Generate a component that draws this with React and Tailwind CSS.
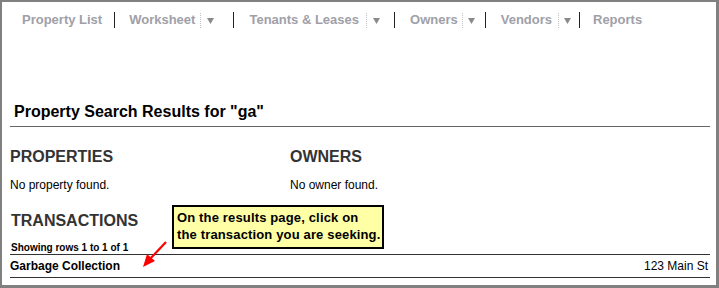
import React from "react";

const navFont = { fontFamily: '"Liberation Sans", Arial, sans-serif' };

function Sep({ ml }) {
  return <div className={`w-px h-[16px] bg-[#222] ${ml}`} />;
}
function Dot({ ml }) {
  return <div className={`h-[15px] border-l border-dotted border-[#c4c4c4] ${ml}`} />;
}
function Caret({ ml }) {
  return (
    <svg className={`${ml} mt-[1px]`} width="7" height="6" viewBox="0 0 7 6">
      <polygon points="0,0 7,0 3.5,6" fill="#8a8a8a" />
    </svg>
  );
}

export default function App() {
  return (
    <div
      className="relative w-[719px] h-[288px] bg-white border-l-2 border-t-2 border-r-[3px] border-b-[3px] border-[#808080] overflow-hidden"
      style={navFont}
    >
      {/* nav */}
      <div className="flex items-center h-[36px] pl-[20px] text-[13px] font-bold text-[#a0a0a8] whitespace-nowrap">
        <span>Property List</span>
        <Sep ml="ml-[12px]" />
        <span className="ml-[14px]">Worksheet</span>
        <Dot ml="ml-[5px]" />
        <Caret ml="ml-[6px]" />
        <Sep ml="ml-[19px]" />
        <span className="ml-[15px]">Tenants &amp; Leases</span>
        <Dot ml="ml-[7px]" />
        <Caret ml="ml-[6px]" />
        <Sep ml="ml-[14px]" />
        <span className="ml-[15px]">Owners</span>
        <Dot ml="ml-[4px]" />
        <Caret ml="ml-[5px]" />
        <Sep ml="ml-[10px]" />
        <span className="ml-[15px]">Vendors</span>
        <Dot ml="ml-[6px]" />
        <Caret ml="ml-[5px]" />
        <Sep ml="ml-[8px]" />
        <span className="ml-[13px]">Reports</span>
      </div>

      <div className="pl-[8px] pr-[6px]">
        <div className="mt-[64px] pb-[4px] border-b border-[#666] pl-[4px] text-[16px] leading-[20px] font-bold text-black">
          Property Search Results for "ga"
        </div>

        <div className="grid grid-cols-[280px_1fr] mt-[20px]">
          <div>
            <div className="text-[16px] leading-[20px] font-bold text-[#333]">PROPERTIES</div>
            <div className="mt-[10px] text-[12px] leading-[16px] text-black">No property found.</div>
          </div>
          <div>
            <div className="text-[16px] leading-[20px] font-bold text-[#333]">OWNERS</div>
            <div className="mt-[10px] text-[12px] leading-[16px] text-black">No owner found.</div>
          </div>
        </div>

        <div className="mt-[18px] pl-[1px] text-[16px] leading-[20px] font-bold text-[#333]">TRANSACTIONS</div>
        <div className="mt-[11px] pl-[1px] text-[10px] leading-[12px] font-bold text-black border-b border-[#333]">
          Showing rows 1 to 1 of 1
        </div>
        <div className="flex justify-between pt-[3px] pb-[3px] border-b border-[#333] text-[12px] leading-[16px] text-black">
          <span className="font-bold">Garbage Collection</span>
          <span className="pr-[2px]">123 Main St</span>
        </div>
      </div>

      {/* callout */}
      <div className="absolute left-[170px] top-[203px] w-[212px] h-[44px] bg-[#ffffa6] border-2 border-black px-[3px] pt-[2px] text-[13px] leading-[17px] font-bold tracking-[0.15px] text-black whitespace-nowrap">
        <div>On the results page, click on</div>
        <div>the transaction you are seeking.</div>
      </div>

      {/* arrow */}
      <svg className="absolute left-0 top-0" width="719" height="288" style={{ pointerEvents: "none" }}>
        <g transform="translate(-2,-2)">
          <line x1="166" y1="242" x2="150" y2="259" stroke="#ff0000" strokeWidth="2.2" />
          <polygon points="143,267 147,254 155,261" fill="#ff0000" />
        </g>
      </svg>
    </div>
  );
}
